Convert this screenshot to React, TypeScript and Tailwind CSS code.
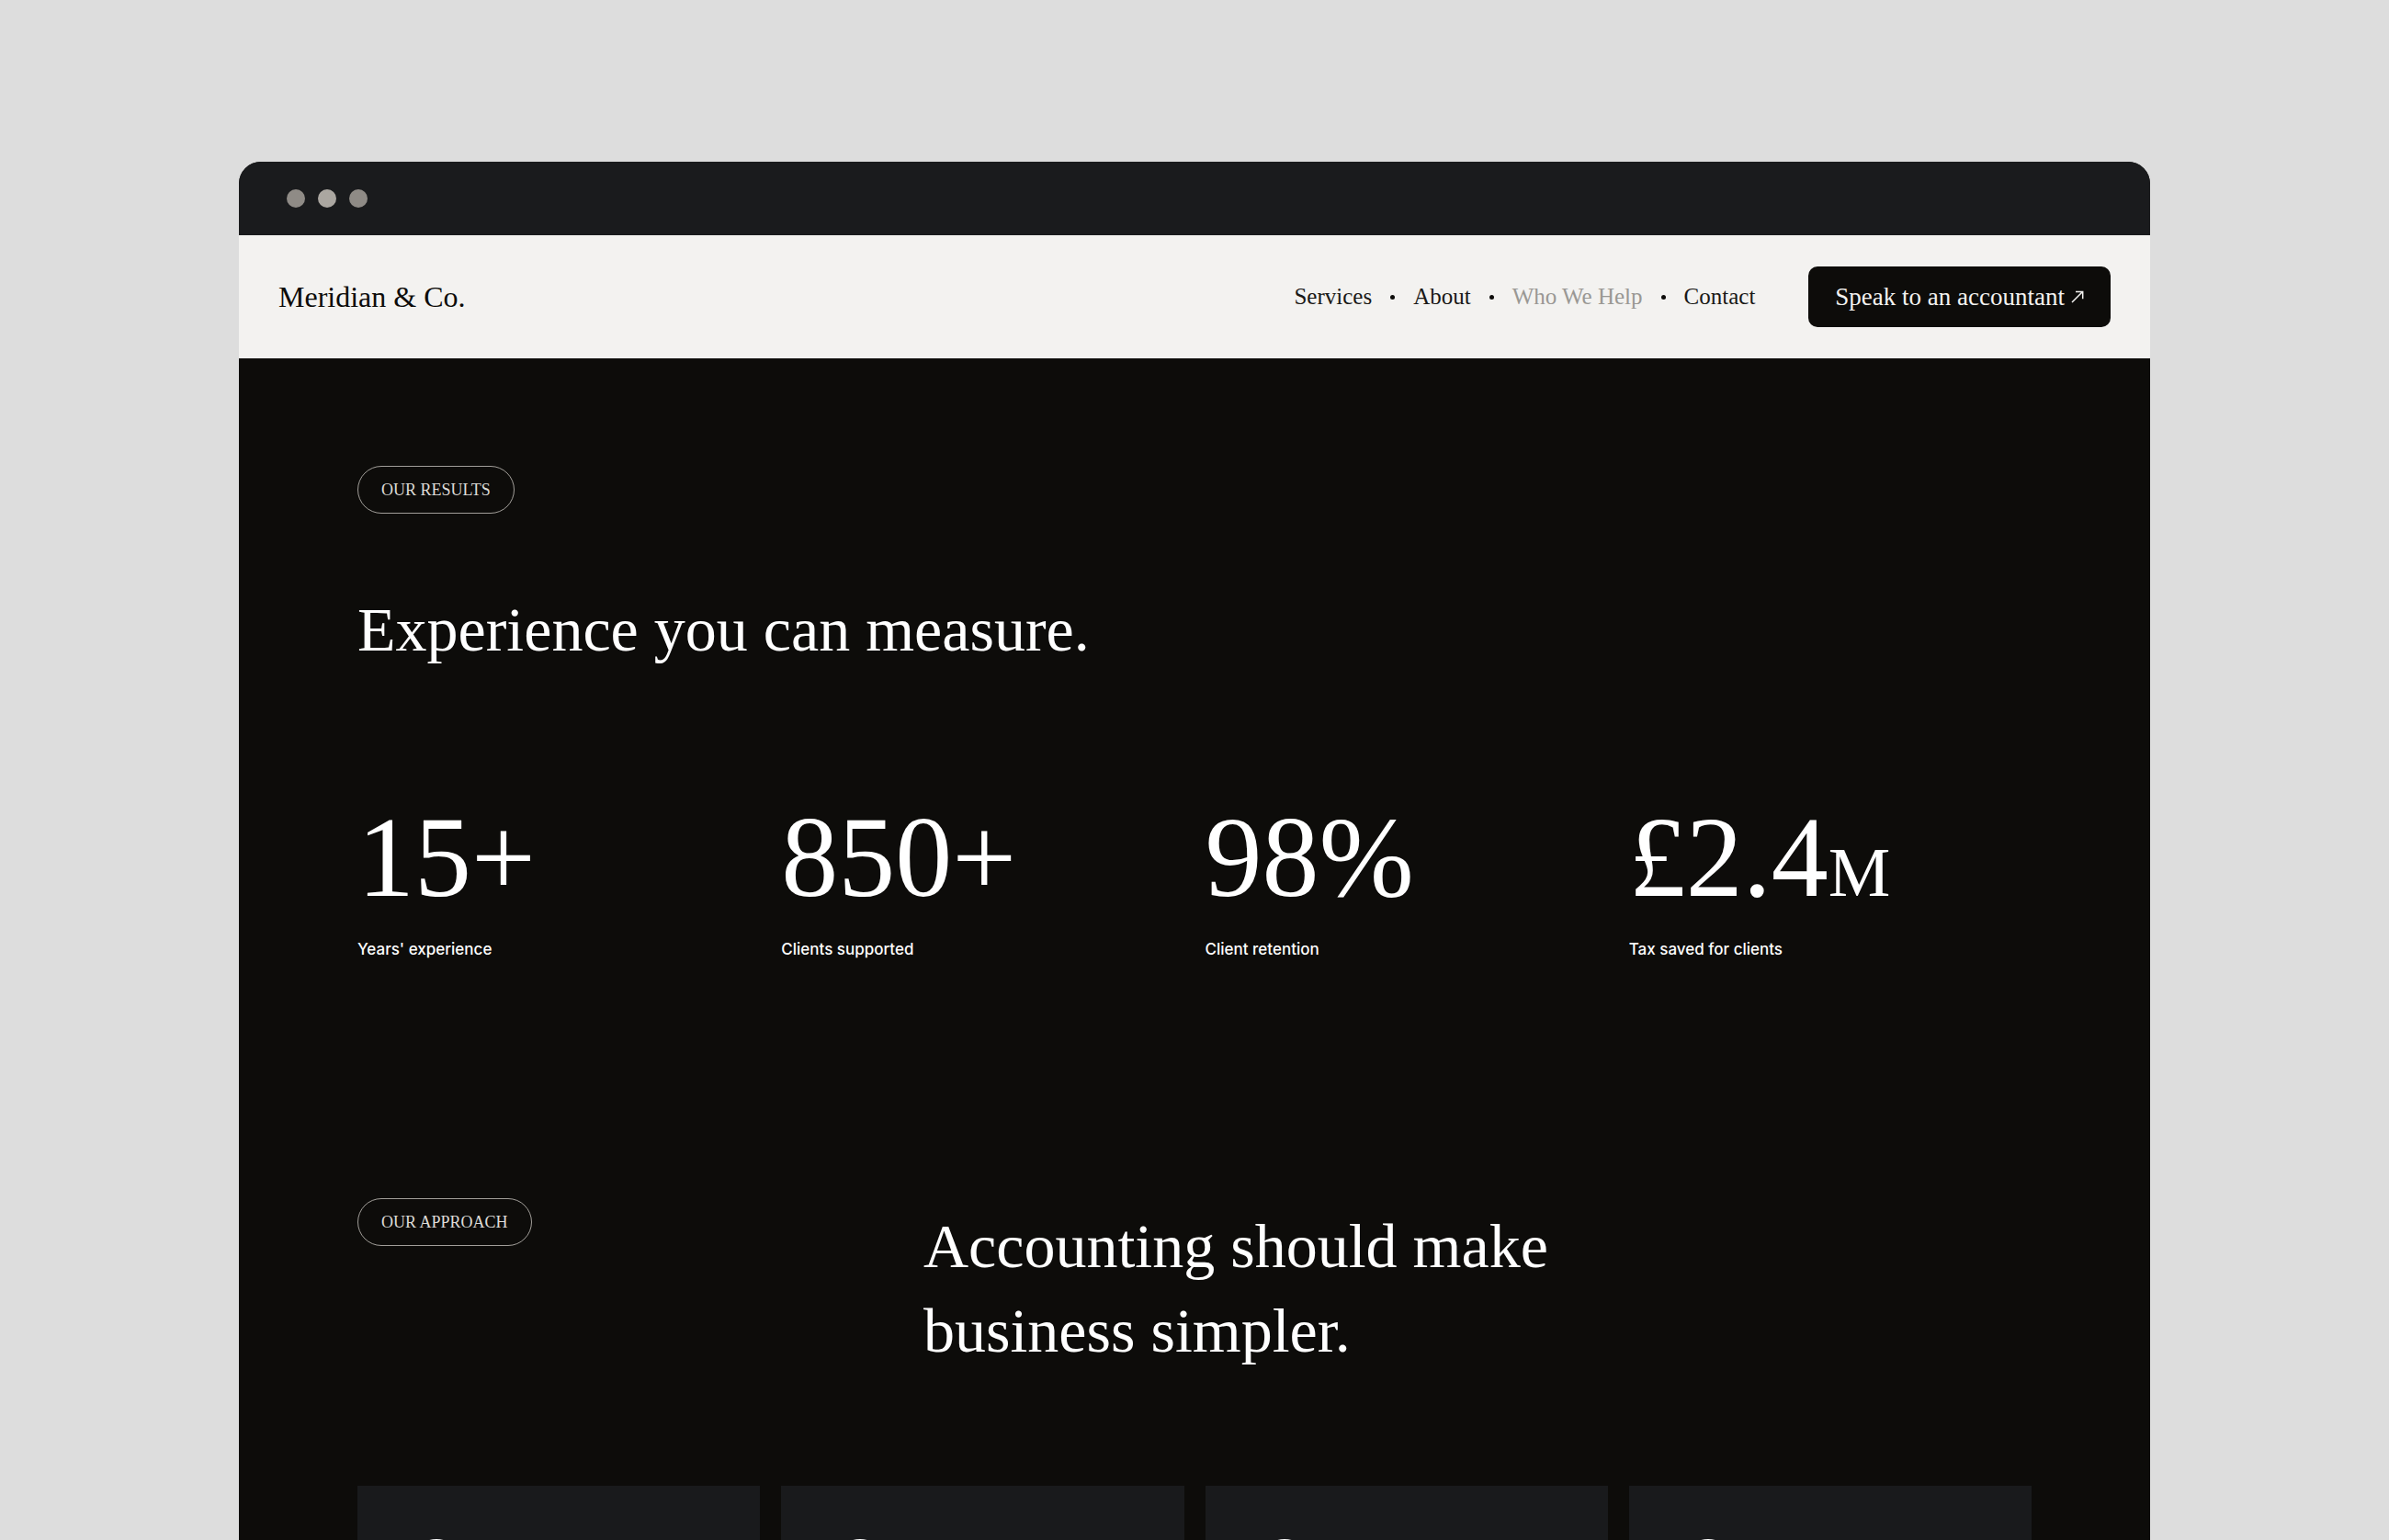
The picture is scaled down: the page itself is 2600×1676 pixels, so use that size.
import React from "react";

const navItems = [
  { label: "Services", active: false },
  { label: "About", active: false },
  { label: "Who We Help", active: true },
  { label: "Contact", active: false },
];

const stats = [
  { value: "15+", unit: "", label: "Years' experience" },
  { value: "850+", unit: "", label: "Clients supported" },
  { value: "98%", unit: "", label: "Client retention" },
  { value: "£2.4", unit: "M", label: "Tax saved for clients" },
];

const steps = ["one", "two", "three", "four"];

function Pill({ children }: { children: React.ReactNode }) {
  return (
    <p className="flex h-[52px] w-fit items-center rounded-full border border-[#a19e99] px-[25px] text-[18px] leading-6 text-[#dddbd7]">
      {children}
    </p>
  );
}

function ArrowUpRight() {
  return (
    <svg viewBox="0 0 14 14" className="size-[14px]" fill="none" stroke="currentColor" strokeWidth="1.5" aria-hidden="true">
      <path d="M1 13 12.5 1.5M5 1.5h7.7v7.7" />
    </svg>
  );
}

export default function App() {
  return (
    <div className="h-screen overflow-hidden bg-[#dddddd] px-[10%] pt-44 font-['Liberation_Serif',serif]">
      <div className="overflow-hidden rounded-t-3xl bg-[#0d0c0a]">
        <div className="flex h-20 items-center gap-[14px] bg-[#1a1b1d] px-[52px]">
          <span className="size-5 rounded-full bg-[#8f8b86]" />
          <span className="size-5 rounded-full bg-[#aba7a1]" />
          <span className="size-5 rounded-full bg-[#8f8b86]" />
        </div>

        <header className="flex h-[134px] items-center justify-between bg-[#f3f2f0] px-[43px] text-[#0d0c0a]">
          <a href="#home" className="text-[32px] leading-10">Meridian &amp; Co.</a>
          <div className="flex items-center gap-[58px]">
            <nav>
              <ul className="flex items-center text-[25px] leading-8">
                {navItems.map((item, i) => (
                  <li key={item.label} className="flex items-center">
                    {i > 0 && <span className="mx-5 size-[5px] rounded-full bg-[#0d0c0a]" />}
                    <a href="#section" className={item.active ? "text-[#9a9894]" : "text-[#1a1917]"}>
                      {item.label}
                    </a>
                  </li>
                ))}
              </ul>
            </nav>
            <button type="button" className="flex h-[66px] items-center gap-[7px] rounded-[10px] bg-[#0d0c0a] px-[29px] text-[27px] leading-8 text-[#f3f2f0]">
              Speak to an accountant
              <ArrowUpRight />
            </button>
          </div>
        </header>

        <main className="px-[129px] text-white">
          <section className="pt-[117px]">
            <Pill>OUR RESULTS</Pill>
            <h2 className="mt-20 text-[68px] leading-[92px]">Experience you can measure.</h2>
            <dl className="mt-[135px] grid grid-cols-4 gap-[23px]">
              {stats.map((s) => (
                <div key={s.label} className="flex flex-col-reverse">
                  <dt className="mt-[19px] font-['Inter',sans-serif] text-[17px] font-medium leading-6">{s.label}</dt>
                  <dd className="text-[124px] leading-[136px]">
                    {s.value}
                    {s.unit && <span className="text-[76px] leading-none">{s.unit}</span>}
                  </dd>
                </div>
              ))}
            </dl>
          </section>

          <section className="pt-[259px]">
            <div className="flex">
              <div className="w-[616px] shrink-0">
                <Pill>OUR APPROACH</Pill>
              </div>
              <h2 className="pt-[6px] text-[68px] leading-[92px]">
                Accounting should make
                <br />
                business simpler.
              </h2>
            </div>
            <ul className="mt-[123px] grid grid-cols-4 gap-[23px]">
              {steps.map((s) => (
                <li key={s} className="h-[480px] bg-[#191a1c] p-[58px]">
                  <svg viewBox="0 0 56 56" className="size-14" fill="none" stroke="#ffffff" strokeWidth="3" aria-hidden="true">
                    <circle cx="28" cy="28" r="26.5" />
                  </svg>
                </li>
              ))}
            </ul>
          </section>
        </main>
      </div>
    </div>
  );
}
